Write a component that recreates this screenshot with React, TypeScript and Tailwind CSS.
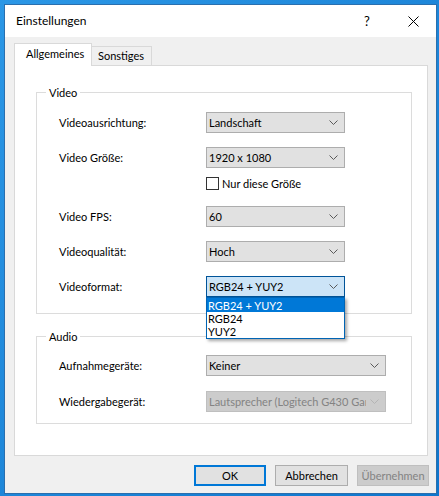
import React from 'react';

type Variant = 'normal' | 'open' | 'disabled';

function Chevron({ variant }: { variant: Variant }) {
  return (
    <svg width="9" height="5" viewBox="0 0 9 5" className="shrink-0">
      <polyline
        points="0.5,0.5 4.5,4.5 8.5,0.5"
        fill="none"
        strokeWidth="1"
        className={variant === 'disabled' ? 'stroke-[#b4b4b4]' : 'stroke-[#5a5a5a]'}
      />
    </svg>
  );
}

function Combo({ value, wide, variant = 'normal', children }: { value: string; wide?: boolean; variant?: Variant; children?: React.ReactNode }) {
  const box =
    variant === 'open'
      ? 'bg-[#cce4f7] border-[#005499]'
      : variant === 'disabled'
      ? 'bg-[#cccccc] border-[#bfbfbf] text-[#838383]'
      : 'bg-[#e1e1e1] border-[#adadad]';
  return (
    <div className={`relative h-[21px] ${wide ? 'w-[180px]' : 'w-[139px]'}`}>
      <div className={`h-full w-full border flex items-center pl-[2px] pr-[6px] gap-[4px] ${box}`}>
        <span className="flex-1 overflow-hidden whitespace-nowrap">{value}</span>
        <Chevron variant={variant} />
      </div>
      {children}
    </div>
  );
}

function Row({ label, className, children }: { label: string; className: string; children: React.ReactNode }) {
  return (
    <div className={`flex items-center h-[21px] ${className}`}>
      <span className="w-[147px] shrink-0">{label}</span>
      {children}
    </div>
  );
}

export default function App() {
  return (
    <div className="w-[439px] h-[496px] bg-gradient-to-br from-[#2b97e6] to-[#0e76cc] pt-[5px] pl-[5px] font-['Lato',sans-serif] text-[11px] text-black leading-[14px]">
      <div className="w-[431px] h-[488px] flex flex-col shadow-[0_0_0_1px_#2a6fae]">
        {/* Title bar */}
        <div className="h-[32px] bg-white flex items-center shrink-0 text-[12px]">
          <span className="pl-[11px]">Einstellungen</span>
          <div className="ml-auto flex h-full">
            <div className="w-[46px] flex items-center justify-center text-[13px]">?</div>
            <div className="w-[46px] flex items-center justify-center">
              <svg width="11" height="11" viewBox="0 0 11 11">
                <path d="M0.5 0.5 L10.5 10.5 M10.5 0.5 L0.5 10.5" stroke="#000" strokeWidth="1" fill="none" />
              </svg>
            </div>
          </div>
        </div>

        {/* Body */}
        <div className="flex-1 bg-[#f0f0f0] flex flex-col pl-[9px] pt-[6px]">
          {/* Tabs */}
          <div className="flex items-end h-[23px] -mb-px relative z-10">
            <div className="w-[78px] h-[23px] bg-white border border-b-0 border-[#d9d9d9] flex items-center pl-[11px] pb-[2px]">
              Allgemeines
            </div>
            <div className="w-[60px] h-[19px] mb-px bg-[#f0f0f0] border border-l-0 border-b-0 border-[#d9d9d9] flex items-center pl-[6px]">
              Sonstiges
            </div>
          </div>

          {/* Panel */}
          <div className="w-[414px] h-[391px] bg-white border border-[#d9d9d9] flex flex-col pl-[21px] pt-[26px]">
            {/* Video group */}
            <div className="relative w-[376px] h-[222px] border border-[#dcdcdc] flex flex-col pl-[22px]">
              <span className="absolute left-[9px] -top-[7px] bg-white px-[3px] leading-[14px]">Video</span>
              <Row label="Videoausrichtung:" className="mt-[19px]">
                <Combo value="Landschaft" />
              </Row>
              <Row label="Video Größe:" className="mt-[14px]">
                <Combo value="1920 x 1080" />
              </Row>
              <div className="flex items-center h-[13px] mt-[9px] pl-[147px] gap-[3px]">
                <div className="w-[13px] h-[13px] border border-[#333333] bg-white shrink-0" />
                <span>Nur diese Größe</span>
              </div>
              <Row label="Video FPS:" className="mt-[16px]">
                <Combo value="60" />
              </Row>
              <Row label="Videoqualität:" className="mt-[14px]">
                <Combo value="Hoch" />
              </Row>
              <Row label="Videoformat:" className="mt-[14px] relative z-20">
                <Combo value="RGB24 + YUY2" variant="open">
                  <div className="absolute left-0 top-[21px] w-full bg-white border border-[#0064b4] shadow-[2px_2px_3px_rgba(0,0,0,0.35)] flex flex-col leading-[13px]">
                    <div className="h-[14px] bg-[#0078d7] text-white pl-[1px] flex items-center">RGB24 + YUY2</div>
                    <div className="h-[13px] pl-[1px] flex items-center">RGB24</div>
                    <div className="h-[13px] pl-[1px] flex items-center">YUY2</div>
                  </div>
                </Combo>
              </Row>
            </div>

            {/* Audio group */}
            <div className="relative w-[376px] h-[88px] mt-[22px] border border-[#dcdcdc] flex flex-col pl-[22px]">
              <span className="absolute left-[9px] -top-[7px] bg-white px-[3px] leading-[14px]">Audio</span>
              <Row label="Aufnahmegeräte:" className="mt-[18px]">
                <Combo value="Keiner" wide />
              </Row>
              <Row label="Wiedergabegerät:" className="mt-[15px]">
                <Combo value="Lautsprecher (Logitech G430 Gaming Headset)" wide variant="disabled" />
              </Row>
            </div>
          </div>

          {/* Buttons */}
          <div className="flex justify-end gap-[9px] mt-[9px] pr-[7px]">
            <button className="w-[72px] h-[21px] border-2 border-[#0078d7] bg-[#e1e1e1] flex items-center justify-center">OK</button>
            <button className="w-[73px] h-[21px] border border-[#adadad] bg-[#e1e1e1] flex items-center justify-center">Abbrechen</button>
            <button className="w-[72px] h-[21px] border border-[#bfbfbf] bg-[#cccccc] text-[#838383] flex items-center justify-center">Übernehmen</button>
          </div>
        </div>
      </div>
    </div>
  );
}
